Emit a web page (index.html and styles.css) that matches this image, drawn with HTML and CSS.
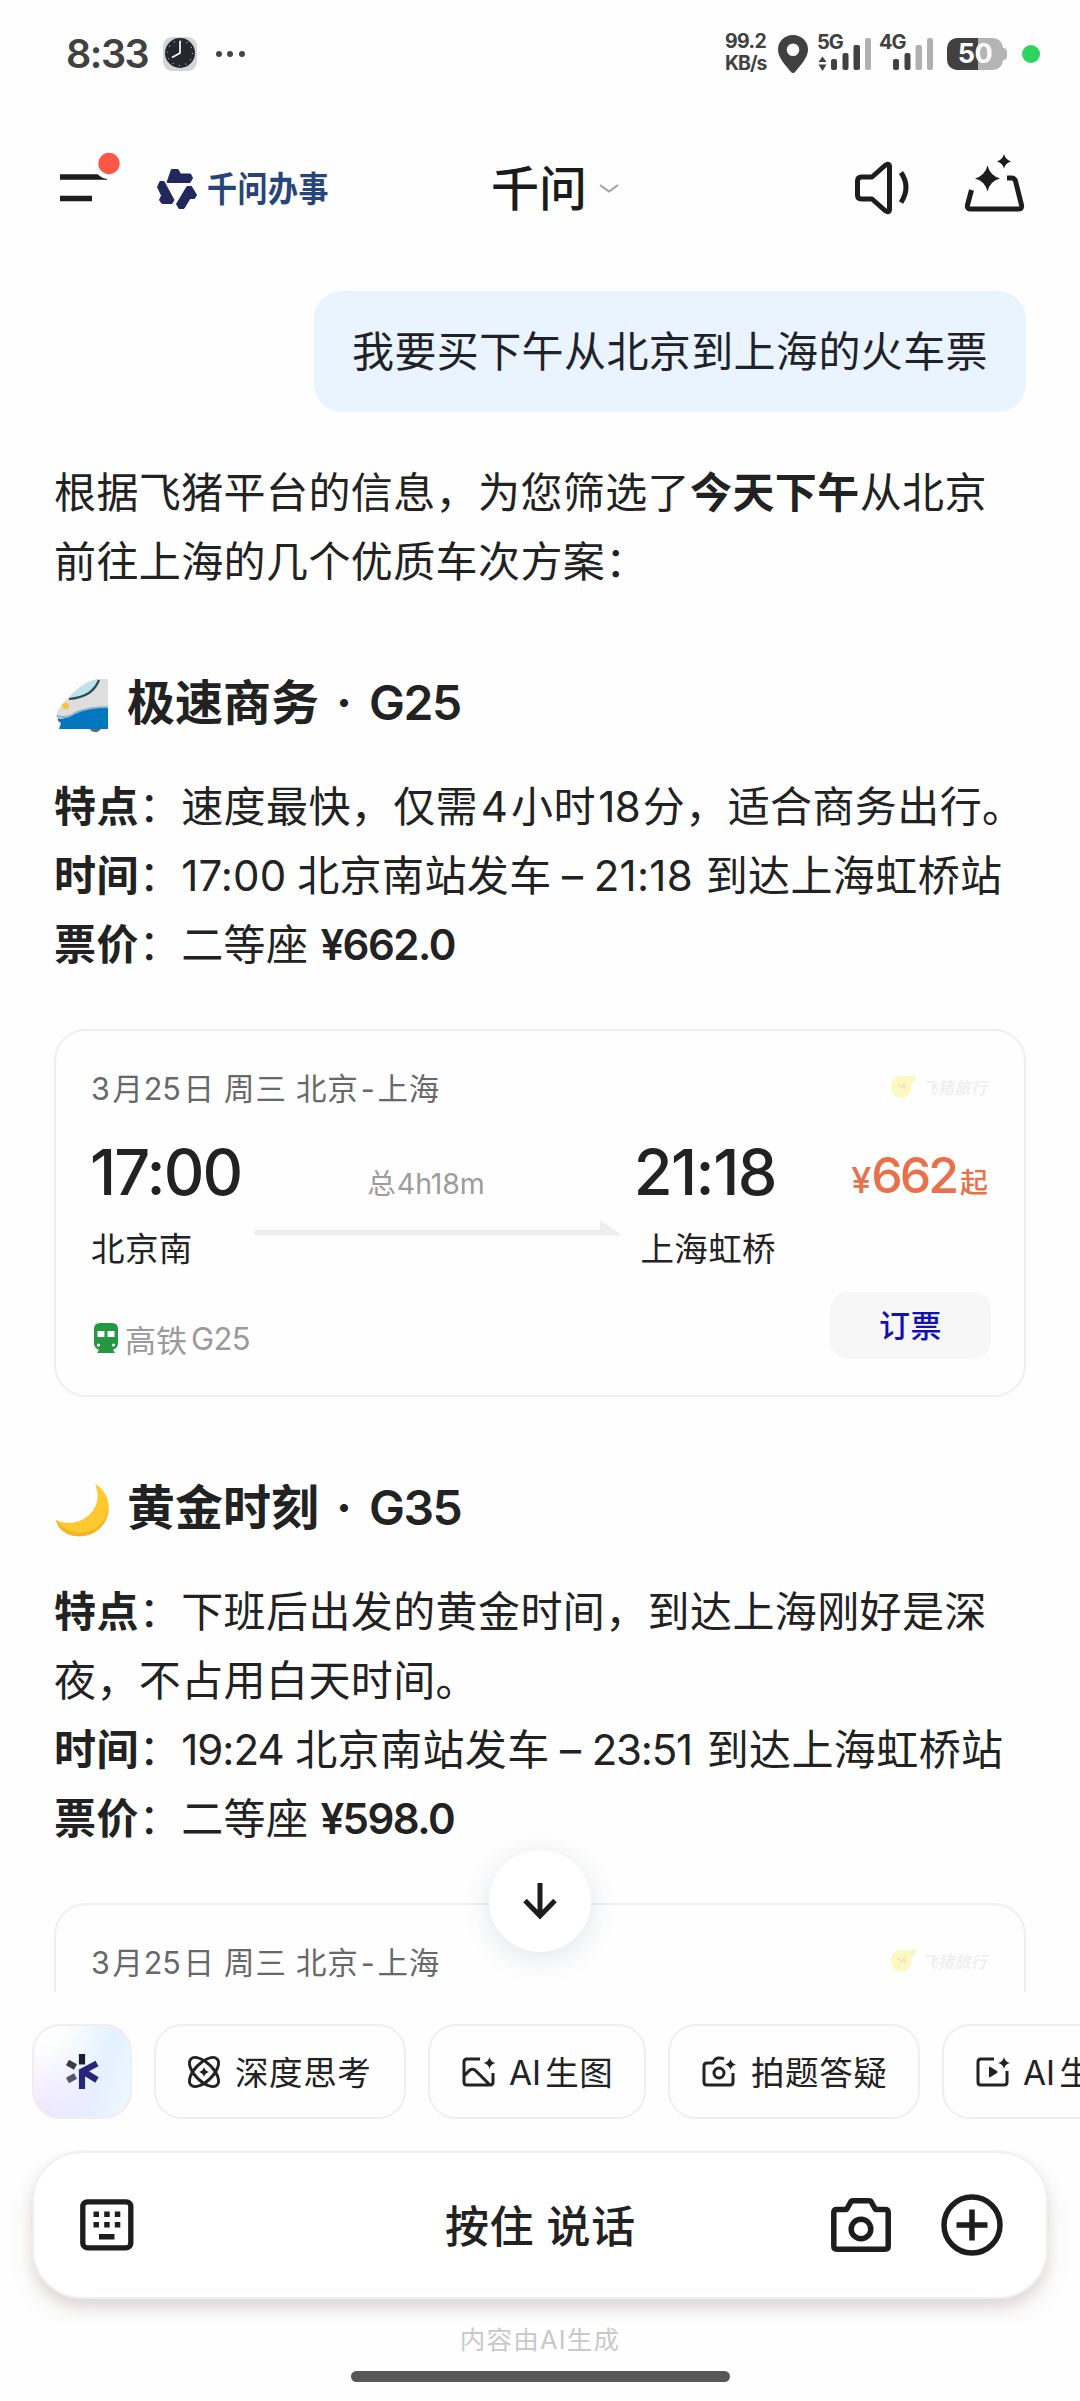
FILE: index.html
```html
<!DOCTYPE html>
<html lang="zh-CN">
<head>
<meta charset="utf-8">
<title>千问</title>
<link rel="stylesheet" href="styles.css">
</head>
<body>
<div class="screen">
  <div class="status">
    <span class="clock">8:33</span>
    <svg class="clock-app" width="36" height="36" viewBox="0 0 36 36"><rect x="1" y="1" width="34" height="34" rx="9" fill="#d3d5da"/><circle cx="18" cy="17" r="15" fill="#26272c"/><circle cx="18" cy="17" r="12.5" fill="none" stroke="#aaa" stroke-width="1.4" stroke-dasharray="1 5.54"/><path d="M18 5v12l-8 4.500" fill="none" stroke="#fff" stroke-width="1.700"/></svg>
    <svg class="more" width="30" height="8" viewBox="0 0 30 8" fill="#444"><circle cx="4" cy="4" r="3"/><circle cx="15" cy="4" r="3"/><circle cx="27" cy="4" r="3"/></svg>
    <div class="speed"><span>99.2</span><span>KB/s</span></div>
    <svg class="pin" width="30" height="38" viewBox="0 0 30 38"><path fill="#414141" fill-rule="evenodd" d="M15 0C6.500 0 0 6.500 0 14.500 0 23 8 30.500 12.500 36.500Q15 39.500 17.500 36.500C22 30.500 30 23 30 14.500 30 6.500 23.500 0 15 0ZM15 8.500a6.300 6.300 0 1 1 0 12.600 6.300 6.300 0 0 1 0-12.600Z"/></svg>
    <div class="signal">
      <span>5G</span>
      <svg width="54" height="33" viewBox="0 0 54 33" fill="#414141"><path d="M5.500 19.500 9.500 25h-8ZM5.500 34 9.500 27.500h-8Z"/><rect x="14" y="22" width="6" height="11" rx="2"/><rect x="25.500" y="16" width="6" height="17" rx="2"/><rect x="36.500" y="8" width="6.500" height="25" rx="2"/><rect x="48" y="1" width="6" height="32" rx="2" fill="#b0b0b0"/></svg>
    </div>
    <div class="signal second">
      <span>4G</span>
      <svg width="54" height="33" viewBox="0 0 54 33" fill="#414141"><rect x="14" y="22" width="6" height="11" rx="2"/><rect x="25.500" y="16" width="6" height="17" rx="2"/><rect x="36.500" y="8" width="6.500" height="25" rx="2" fill="#b0b0b0"/><rect x="48" y="1" width="6" height="32" rx="2" fill="#b0b0b0"/></svg>
    </div>
    <div class="battery"><span>50</span></div>
    <i class="live"></i>
  </div>

  <header class="topbar">
    <svg class="menu" width="62" height="60" viewBox="0 0 62 60"><path d="M0 27h47M0 48.500h32" stroke="#1d1d1d" stroke-width="5.500"/><circle cx="49" cy="13.500" r="15.500" fill="#fff"/><circle cx="49" cy="13.500" r="10.700" fill="#fc5747"/></svg>
    <svg class="brand-mark" width="40" height="40" viewBox="157 169 40 40" fill="#20285e" stroke="#20285e" stroke-width="1" stroke-linejoin="round"><path d="M167 182.500 171.500 169.500H178L180.500 174H190.500L192.500 178 190 182.500Z"/><path d="M157.500 187 160 181.500H164L174 200 172 203.500H162L159.500 200 161.500 195.500Z"/><path d="M187 186.500H191.500L196.500 195 194.500 198.500H190L184 208.500H179L176.500 204Z"/></svg>
    <span class="brand">千问办事</span>
    <span class="title">千问</span>
    <svg class="chev" width="20" height="12" viewBox="0 0 20 12" fill="none" stroke="#a0a0a0" stroke-width="2"><path d="M1 2l9 6.500L19 2"/></svg>
    <svg class="speaker" width="54" height="54" viewBox="0 0 54 54" fill="none" stroke="#1d1d1d" stroke-width="5"><path stroke-linejoin="round" d="M6.500 16H17L30 4.500Q34.500 1.500 34.500 6V48Q34.500 52.500 30 49.500L17 38H6.500Q2.500 38 2.500 34V20Q2.500 16 6.500 16Z"/><path d="M46 11.500Q56 26 46 41.500"/></svg>
    <svg class="magic" width="61" height="58" viewBox="0 0 61 58"><path fill="none" stroke="#1d1d1d" stroke-width="5" stroke-linejoin="round" d="M7.500 36 3.500 51Q2.500 55 7 55H54Q58.500 55 57.500 51L51.500 27Q50.500 24 47.500 24H43"/><path fill="#1d1d1d" d="M23.500 11.500Q26 21.500 36 24.500 26 27 23.500 37.500 21 27 11 24.500 21 21.500 23.500 11.500ZM40 0Q41.500 5.500 47 7.500 41.500 9 40 14.500 38.500 9 33 7.500 38.500 5.500 40 0Z"/></svg>
  </header>

  <main class="chat">
    <div class="bubble">我要买下午从北京到上海的火车票</div>
    <p class="para">根据飞猪平台的信息，为您筛选了<b>今天下午</b>从北京<br>前往上海的几个优质车次方案：</p>

    <h2 class="plan-title"><svg width="54" height="54" viewBox="0 0 54 54"><path d="M53 1H42C25 4 12 20 3 32L1 38Q4 44 8 44H53Z" fill="#dedede"/><path d="M40 2C28 6 19 15 14 21Q26 19 35 14 41 9 44 2Z" fill="#b9e3ee"/><path d="M44 2Q41 10 34 15 26 20 14 21" fill="none" stroke="#35474f" stroke-width="2.200"/><ellipse cx="10.500" cy="28" rx="3.500" ry="3.200" fill="#f5c343"/><path d="M3 40Q7 43 18 36 32 29 53 29V51H4L6 45Q2 43 3 40Z" fill="#0277bd"/><path d="M2 38Q12 41 20 35 32 29 53 29" fill="none" stroke="#90b4cb" stroke-width="2"/><path d="M35 51H46Q43 55 40 54 36 54 35 51Z" fill="#546e7a"/></svg><span>极速商务</span><i>·</i><span class="num">G25</span></h2>
    <div class="facts">
      <p><b>特点</b>：速度最快，仅需<span class="n4">4</span>小时<span class="n18">18</span>分，适合商务出行。</p>
      <p><b>时间</b>：<span class="num t1">17:00</span>北京南站发车<span class="dash">–</span><span class="num t2">21:18</span>到达上海虹桥站</p>
      <p><b>票价</b>：二等座<b class="num fare">¥662.0</b></p>
    </div>

    <section class="card">
      <div class="card-head"><span class="date"><span class="num">3</span>月<span class="num">25</span>日 周三 北京<span class="hy">-</span>上海</span>
        <span class="fliggy"><svg width="27" height="24" viewBox="0 0 27 24"><path d="M1 12C1 4 6 1 12 1H26Q26 6 21 9 23 20 12 23 1 22 1 12Z" fill="#fdf8c2"/><path d="M8 9l2 2M13 10l3 4M15 9l-5 4" stroke="#f2d9b5" stroke-width="1.500"/></svg>飞猪旅行</span></div>
      <div class="journey">
        <div class="stop"><span class="time">17:00</span><span class="station">北京南</span></div>
        <div class="route"><span>总<span class="num">4h18m</span></span><svg width="368" height="16" viewBox="0 0 368 16" fill="#eeeeee"><path d="M3 9.500H346V0L368 15.500H3A3 3 0 0 1 3 9.500Z"/></svg></div>
        <div class="stop arrive"><span class="time">21:18</span><span class="station">上海虹桥</span></div>
        <div class="price"><span class="yen">¥</span><span class="amount">662</span><span class="from">起</span></div>
      </div>
      <div class="card-foot"><span class="train"><svg width="24" height="30" viewBox="0 0 24 30"><path fill="#249743" d="M6 0H18Q24 0 24 6V20Q24 25 19 27L21 30H3L5 27Q0 25 0 20V6Q0 0 6 0Z"/><path fill="#fff" d="M3.500 8h7v6h-7ZM13.500 8h7v6h-7Z"/><circle cx="4.500" cy="22" r="1.500" fill="#fff"/><circle cx="19.500" cy="22" r="1.500" fill="#fff"/></svg>高铁<span class="num">G25</span></span><a class="book">订票</a></div>
    </section>

    <h2 class="plan-title"><svg width="54" height="54" viewBox="0 0 54 54"><path d="M40 1C58 11 59 38 40 49 24 58 4 52 1 37 15 43 28 39 36 30 44 21 44 11 40 1Z" fill="#fdc92f"/><path d="M1 37C4 52 24 58 40 49 50 42 53 34 53 25 49 52 16 58 1 37Z" fill="#f5b32a"/></svg><span>黄金时刻</span><i>·</i><span class="num">G35</span></h2>
    <div class="facts">
      <p><b>特点</b>：下班后出发的黄金时间，到达上海刚好是深</p>
      <p>夜，不占用白天时间。</p>
      <p><b>时间</b>：<span class="num t1 g35">19:24</span>北京南站发车<span class="dash">–</span><span class="num t2 g35">23:51</span>到达上海虹桥站</p>
      <p><b>票价</b>：二等座<b class="num fare">¥598.0</b></p>
    </div>

    <section class="card">
      <div class="card-head"><span class="date"><span class="num">3</span>月<span class="num">25</span>日 周三 北京<span class="hy">-</span>上海</span>
        <span class="fliggy"><svg width="27" height="24" viewBox="0 0 27 24"><path d="M1 12C1 4 6 1 12 1H26Q26 6 21 9 23 20 12 23 1 22 1 12Z" fill="#fdf8c2"/><path d="M8 9l2 2M13 10l3 4M15 9l-5 4" stroke="#f2d9b5" stroke-width="1.500"/></svg>飞猪旅行</span></div>
    </section>
  </main>
  <div class="to-bottom"><svg width="34" height="38" viewBox="0 0 34 38" fill="none" stroke="#1d1d1d" stroke-width="5"><path d="M17 1V33M2 18.500 17 34 32 18.500"/></svg></div>

  <nav class="chips">
    <div class="chip spark"><svg width="32" height="35" viewBox="0 0 32 35" fill="none" stroke-width="6.200"><path d="M16 0V10.500" stroke="#1b1d30"/><path d="M1.500 8.500 9.500 13" stroke="#3b3c4a"/><path d="M1.500 26.500 9.500 22" stroke="#55556a"/><path d="M16 16.500V35M14 18.500 31 9.500M19 18.500 31 26" stroke="#26277a"/></svg></div>
    <div class="chip"><svg width="32" height="32" viewBox="0 0 32 32" fill="none" stroke="#222" stroke-width="2.900"><ellipse cx="16" cy="16" rx="18.500" ry="9" transform="rotate(45 16 16)"/><ellipse cx="16" cy="16" rx="18.500" ry="9" transform="rotate(-45 16 16)"/><path fill="#222" stroke="none" d="M16 11Q17 15 21 16 17 17 16 21 15 17 11 16 15 15 16 11Z"/></svg><span>深度思考</span></div>
    <div class="chip"><svg width="34" height="32" viewBox="0 0 34 32" fill="none" stroke="#222" stroke-width="3"><path d="M18 3H5Q2 3 2 6V26Q2 29 5 29H28Q31 29 31 26V17M2 20 8 14Q11 12 14 15L28 29"/><path fill="#222" stroke="none" d="M27.500 1Q28.500 6 33.500 7 28.500 8 27.500 13 26.500 8 21.500 7 26.500 6 27.500 1Z"/></svg><span><span class="num">AI</span>生图</span></div>
    <div class="chip"><svg width="34" height="32" viewBox="0 0 34 32" fill="none" stroke="#222" stroke-width="3"><path d="M22 3Q20 2 17 2 13 2 11 7H5Q2 7 2 10V26Q2 29 5 29H28Q31 29 31 26V17"/><circle cx="17" cy="17" r="5"/><path fill="#222" stroke="none" d="M28.500 3Q29.500 7.500 34 8.500 29.500 9.500 28.500 14 27.500 9.500 23 8.500 27.500 7.500 28.500 3Z"/></svg><span>拍题答疑</span></div>
    <div class="chip"><svg width="34" height="32" viewBox="0 0 34 32" fill="none" stroke="#222" stroke-width="3"><path d="M18 3H5Q2 3 2 6V26Q2 29 5 29H28Q31 29 31 26V15"/><path fill="#222" stroke="none" d="M13 11.500Q13 10 14.500 11L21 15Q22 16 21 17L14.500 21Q13 22 13 20.500ZM28 1Q29 6 34 7 29 8 28 13 27 8 22 7 27 6 28 1Z"/></svg><span><span class="num">AI</span>生</span></div>
  </nav>

  <div class="dock">
    <div class="input">
      <svg class="kbd" width="54" height="52" viewBox="0 0 54 52"><rect x="2.800" y="2.800" width="48" height="46" rx="4.500" fill="none" stroke="#1d1d1d" stroke-width="5.300"/><path fill="#1d1d1d" d="M13.500 12.500h5.500v5.500h-5.500zM24.200 12.500h5.500v5.500h-5.500zM34.800 12.500h5.500v5.500h-5.500zM13.500 23h5.500v5.500h-5.500zM24.200 23h5.500v5.500h-5.500zM34.800 23h5.500v5.500h-5.500zM19 35h15.500v5.500H19z"/></svg>
      <span class="hold">按住 说话</span>
      <svg class="cam" width="60" height="54" viewBox="0 0 60 54" fill="none" stroke="#1d1d1d" stroke-width="5.500" stroke-linejoin="round"><path d="M6 11.500H15.500L20 3.500Q20.500 2.700 22 2.700H38Q39.500 2.700 40 3.500L44.500 11.500H54Q57.200 11.500 57.200 14.500V48Q57.200 51.200 54 51.200H6Q2.800 51.200 2.800 48V14.500Q2.800 11.500 6 11.500Z"/><circle cx="30" cy="31" r="9.800"/></svg>
      <svg class="plus" width="62" height="62" viewBox="0 0 62 62" fill="none" stroke="#1d1d1d" stroke-width="5.500"><circle cx="31" cy="31" r="28"/><path d="M31 15.500V46.500M15.500 31H46.500"/></svg>
    </div>
  </div>
  <p class="note">内容由<span class="num">AI</span>生成</p>
  <div class="home"></div>
</div>
</body>
</html>
```
FILE: styles.css
```css
* { box-sizing: border-box; margin: 0; padding: 0; }
body { background: #fefefe; color: #222; font-family: Inter, "Noto Sans CJK SC", sans-serif; }
svg { display: block; flex: none; overflow: visible; }
i { font-style: normal; }
b { font-weight: 700; }
.screen { position: relative; width: 1080px; height: 2401px; overflow: hidden; display: flex; flex-direction: column; white-space: nowrap; background: #fefefe; }

/* status bar */
.status { height: 107px; flex: none; display: flex; align-items: center; padding-left: 66px; color: #414141; }
.clock { width: 81px; margin-right: 15px; font-size: 39.500px; font-weight: 600; letter-spacing: -1.500px; }
.clock-app { margin-right: 17px; }
.more { margin-right: 480px; }
.speed { width: 53px; display: flex; flex-direction: column; font-size: 19.500px; line-height: 22px; font-weight: 700; letter-spacing: -.6px; margin-top: -3px; }
.speed span:last-child { letter-spacing: -1px; }
.pin { margin-right: 9px; }
.signal { position: relative; width: 54px; height: 33px; }
.signal span { position: absolute; left: 0; top: -3px; font-size: 20px; line-height: 16px; font-weight: 700; letter-spacing: -1px; }
.signal.second { margin-left: 8px; }
.battery { position: relative; width: 56px; height: 32px; margin-left: 14px; border-radius: 10px; background: linear-gradient(90deg, #414141 31px, #b4b4b4 31px); color: #fff; font-weight: 700; font-size: 27px; line-height: 32px; text-align: center; letter-spacing: -.5px; }
.battery::after { content: ""; position: absolute; left: 56px; top: 10px; width: 4px; height: 12px; border-radius: 0 4px 4px 0; background: #b4b4b4; }
.live { width: 18px; height: 18px; border-radius: 50%; background: #2fd35f; margin-left: 19px; }

/* header */
.topbar { height: 160px; flex: none; display: flex; align-items: center; padding: 0 55px 26px 60px; }
.menu { margin: 0 35px 0 0; align-self: flex-start; margin-top: 43px; }
.topbar .brand-mark { margin-top: 30px; }
.brand { width: 124px; margin: 30px 0 0 10px; font-size: 30px; line-height: 40px; font-weight: 700; letter-spacing: .5px; color: #294478; transform: scaleY(1.18); }
.title { width: 97px; margin: 29px 0 0 160px; font-size: 48px; line-height: 60px; font-weight: 500; color: #1b1b1b; }
.chev { margin: 29px 0 0 11px; }
.speaker { margin: 28px 55px 0 auto; }
.magic { margin-top: 17px; }

/* conversation */
.chat { height: 1725px; flex: none; overflow: hidden; padding: 24px 54px 0; display: flex; flex-direction: column; }
.bubble { align-self: flex-end; width: 712px; height: 121px; padding-left: 38px; border-radius: 28px; background: #e9f4ff; font-size: 42px; line-height: 121px; letter-spacing: .4px; color: #1f2329; }
.para { margin-top: 46px; font-size: 42px; line-height: 69px; letter-spacing: .4px; }
.plan-title { display: flex; align-items: center; height: 70px; margin-top: 72px; font-size: 48px; line-height: 70px; font-weight: 700; }
.plan-title svg { margin: 4px 18px 0 1px; }
.plan-title i { width: 50px; text-align: center; }
.plan-title .num { font-weight: 600; letter-spacing: -1.500px; margin-left: 0; }
.card + .plan-title { margin-top: 76px; }
.facts { margin-top: 34px; font-size: 42px; line-height: 69px; letter-spacing: .4px; }
.facts .n4 { display: inline-block; width: 33px; text-align: center; }
.facts .n18 { display: inline-block; width: 47px; text-align: center; letter-spacing: -.5px; }
.facts .t1 { display: inline-block; width: 116px; letter-spacing: .1px; }
.facts .dash { display: inline-block; width: 42px; text-align: center; }
.facts .t2 { display: inline-block; width: 112px; letter-spacing: .3px; }
.facts .t1.g35 { width: 114px; letter-spacing: -1px; }
.facts .t2.g35 { width: 115px; letter-spacing: -1.200px; }
.facts .fare { margin-left: 12px; font-weight: 600; letter-spacing: -1.500px; }

/* ticket card */
.card { flex: none; height: 368px; margin-top: 50px; padding: 26px 33px 36px 35px; border: 2px solid #f0f0f0; border-radius: 32px; width: 972px; }
.card-head { display: flex; justify-content: space-between; align-items: center; height: 60px; }
.date { font-size: 30.500px; letter-spacing: .8px; color: #686868; }
.date .num { letter-spacing: -.3px; margin-right: 3px; }
.date .hy { margin: 0 2px; }
.fliggy { display: flex; align-items: center; gap: 4px; padding-right: 4px; font-size: 16.500px; font-style: italic; font-weight: 500; color: #eeeeee; }
.journey { display: flex; height: 131px; margin-top: 21px; }
.stop { width: 163px; display: flex; flex-direction: column; justify-content: space-between; }
.time { font-size: 63px; line-height: 68px; font-weight: 500; letter-spacing: -1.800px; margin-left: -1px; }
.station { font-size: 33.500px; line-height: 40px; letter-spacing: .4px; }
.arrive { width: 154px; align-items: flex-end; }
.arrive .time { letter-spacing: -1.500px; }
.route { width: 368px; display: flex; flex-direction: column; align-items: center; color: #9c9c9c; font-size: 28.500px; line-height: 40px; padding-top: 26px; gap: 16px; }
.route .num { letter-spacing: -.1px; margin-left: 1px; }
.route > span { margin-left: -24px; }
.price { flex: 1; display: flex; justify-content: flex-end; align-items: baseline; color: #e8714b; padding-right: 3px; line-height: 74px; }
.yen { font-size: 36px; font-weight: 500; }
.amount { font-size: 50px; font-weight: 500; letter-spacing: -3px; margin: 0 4px 0 0; }
.from { font-size: 28px; font-weight: 500; }
.card-foot { display: flex; justify-content: space-between; height: 67px; margin-top: 23px; }
.train { display: flex; align-items: center; color: #9a9a9a; font-size: 31px; padding: 25px 0 0 3px; }
.train svg { margin-right: 7px; }
.train .num { margin-left: 4px; letter-spacing: -.6px; }
.book { width: 161px; margin-right: 0; border-radius: 18px; background: #f7f7f7; text-align: center; line-height: 67px; font-size: 31px; font-weight: 500; color: #1010b4; letter-spacing: .6px; }

.to-bottom { position: absolute; left: 489px; top: 1850px; width: 102px; height: 102px; border-radius: 50%; background: #fff; display: flex; align-items: center; justify-content: center; box-shadow: 0 6px 28px rgba(60, 80, 120, .14); }

/* shortcut chips */
.chips { display: flex; flex: none; gap: 22px; padding: 32px 0 0 32px; height: 158px; }
.chip { display: flex; flex: none; align-items: center; width: 252px; height: 95px; padding-left: 32px; border: 2px solid #efefef; border-radius: 28px; font-size: 33.500px; letter-spacing: .6px; color: #222; }
.chip > span { margin-top: -2px; }
.chip svg { margin-right: 15px; }
.chip:nth-child(3) { width: 218px; }
.chip:nth-child(3) svg, .chip:nth-child(5) svg { margin-right: 13px; }
.chip .num { letter-spacing: 0; margin-right: 4px; }
.chip.spark { width: 100px; padding: 0; justify-content: center; background: radial-gradient(circle at 10% 100%, #ede6ff 0, rgba(236, 230, 255, 0) 60%), linear-gradient(110deg, #fff 20%, #e4f1ff 65%, #f1f8ff); }
.chip.spark svg { margin: 0; }

.dock { flex: none; height: 171px; overflow: hidden; padding: 1px 32px 0; }
.input { display: flex; align-items: center; height: 148px; border: 2px solid #f0f0f0; border-radius: 50px; background: #fff; padding: 0 43px 0 46px; box-shadow: 0 8px 14px rgba(70, 50, 30, .14), 0 14px 30px rgba(90, 60, 50, .06); }
.hold { margin-left: 311px; width: 192px; margin-top: -3px; font-size: 44px; font-weight: 500; letter-spacing: .6px; }
.cam { margin-left: auto; margin-right: 50px; }
.note { height: 50px; line-height: 38px; text-align: center; font-size: 25.500px; letter-spacing: 1.200px; color: #c9c9c9; }
.home { width: 379px; height: 11px; border-radius: 6px; background: #575757; margin: 0 auto; }
```
